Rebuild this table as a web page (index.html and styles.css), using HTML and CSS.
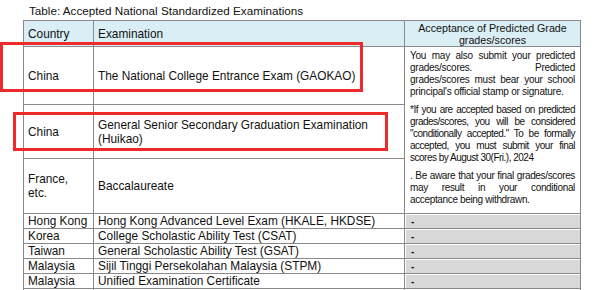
FILE: index.html
```html
<!DOCTYPE html>
<html>
<head>
<meta charset="utf-8">
<link rel="stylesheet" href="styles.css">
</head>
<body>
<div class="page">
  <div class="caption">Table: Accepted National Standardized Examinations</div>
  <table class="exams">
    <colgroup>
      <col class="c1"><col class="c2"><col class="c3">
    </colgroup>
    <thead>
      <tr class="head">
        <th class="country">Country</th>
        <th class="exam">Examination</th>
        <th class="accept">Acceptance of Predicted Grade<br>grades/scores</th>
      </tr>
    </thead>
    <tbody>
      <tr class="r1">
        <td>China</td>
        <td>The National College Entrance Exam (GAOKAO)</td>
        <td class="note" rowspan="3">
          <p class="p1">You may also submit your predicted grades/scores. Predicted grades/scores must bear your school principal's official stamp or signature.</p>
          <p class="p2">*If you are accepted based on predicted grades/scores, you will be considered "conditionally accepted." To be formally accepted, you must submit your final scores by August 30(Fri.), 2024</p>
          <p class="p3">. Be aware that your final grades/scores may result in your conditional acceptance being withdrawn.</p>
        </td>
      </tr>
      <tr class="r2">
        <td>China</td>
        <td>General Senior Secondary Graduation Examination (Huikao)</td>
      </tr>
      <tr class="r3">
        <td>France,<br>etc.</td>
        <td>Baccalaureate</td>
      </tr>
      <tr class="sm">
        <td>Hong Kong</td>
        <td>Hong Kong Advanced Level Exam (HKALE, HKDSE)</td>
        <td class="dash">-</td>
      </tr>
      <tr class="sm">
        <td>Korea</td>
        <td>College Scholastic Ability Test (CSAT)</td>
        <td class="dash">-</td>
      </tr>
      <tr class="sm">
        <td>Taiwan</td>
        <td>General Scholastic Ability Test (GSAT)</td>
        <td class="dash">-</td>
      </tr>
      <tr class="sm">
        <td>Malaysia</td>
        <td>Sijil Tinggi Persekolahan Malaysia (STPM)</td>
        <td class="dash">-</td>
      </tr>
      <tr class="sm">
        <td>Malaysia</td>
        <td>Unified Examination Certificate</td>
        <td class="dash">-</td>
      </tr>
      <tr class="sm">
        <td>Malaysia</td>
        <td>Matriculation Programme Exam</td>
        <td class="dash">-</td>
      </tr>
    </tbody>
  </table>
  <div class="mark mark1"></div>
  <div class="mark mark2"></div>
</div>
</body>
</html>
```

FILE: styles.css
```css
html, body {
  margin: 0;
  padding: 0;
  background: #ffffff;
  overflow: hidden;
}
body {
  width: 600px;
  height: 290px;
  font-family: "Liberation Sans", Arial, sans-serif;
  color: #111;
}
.page {
  position: relative;
  width: 600px;
  height: 290px;
  overflow: hidden;
}
.caption {
  padding: 4px 0 0 29px;
  height: 16px;
  font-size: 11.7px;
  line-height: 14px;
}
.exams {
  margin-left: 23px;
  width: 557px;
  border-collapse: collapse;
  table-layout: fixed;
  font-size: 11.85px;
  line-height: 14px;
}
.c1 { width: 70px; }
.c2 { width: 311px; }
.c3 { width: 176px; }
.exams th, .exams td {
  border: 1px solid #8a8a8a;
  padding: 0 4px;
  vertical-align: middle;
  text-align: left;
  font-weight: normal;
  overflow: hidden;
}
.head th {
  background: #daeef5;
  height: 22px;
}
.head .accept {
  text-align: center;
  font-size: 10.7px;
  line-height: 12px;
  padding-top: 1px;
}
.r1 td { height: 57px; }
.r2 td { height: 53px; }
.r3 td { height: 54px; }
.sm td {
  height: 14px;
  line-height: 13px;
  white-space: nowrap;
}
.exams td.note {
  vertical-align: top;
  padding: 3px 5px 0 5px;
  font-size: 10px;
  line-height: 12px;
  text-align: justify;
  letter-spacing: -0.25px;
}
.note p {
  margin: 0 0 6px 0;
}
.note .p2 {
  letter-spacing: -0.5px;
}
.note .p3 {
  letter-spacing: -0.35px;
  margin-bottom: 0;
}
.exams td.dash {
  background: #d8d8d8;
  box-shadow: inset 1px 1px 0 #ffffff;
  padding-left: 6px;
  font-weight: bold;
  font-size: 10px;
}
.mark {
  position: absolute;
  border: 3px solid #ee2a2a;
  box-sizing: border-box;
}
.mark1 {
  left: 0;
  top: 42px;
  width: 363px;
  height: 50px;
}
.mark2 {
  left: 13px;
  top: 112px;
  width: 375px;
  height: 39px;
}
```
